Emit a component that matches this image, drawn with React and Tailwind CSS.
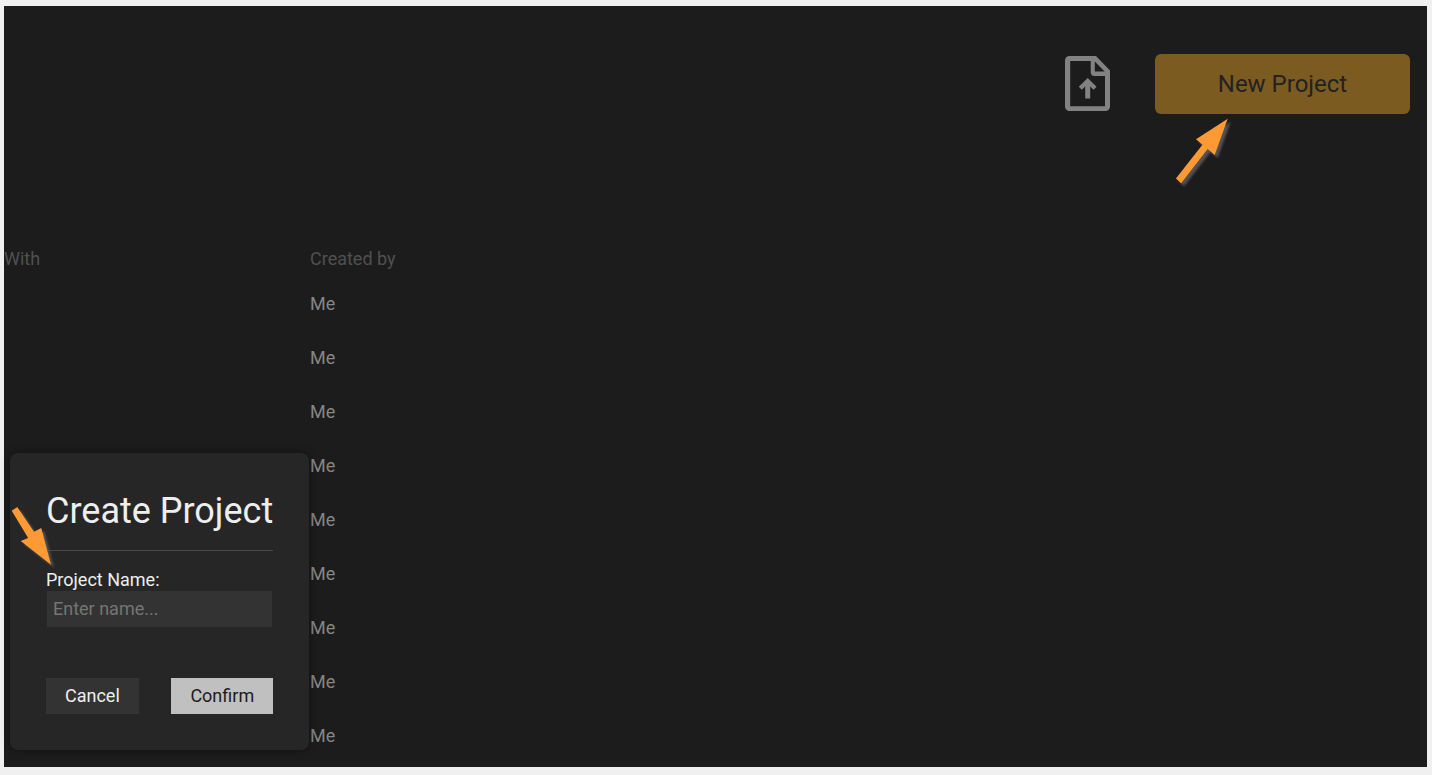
import { useState } from 'react';

const projects = [
  { id: 1, sharedWith: '', createdBy: 'Me' },
  { id: 2, sharedWith: '', createdBy: 'Me' },
  { id: 3, sharedWith: '', createdBy: 'Me' },
  { id: 4, sharedWith: '', createdBy: 'Me' },
  { id: 5, sharedWith: '', createdBy: 'Me' },
  { id: 6, sharedWith: '', createdBy: 'Me' },
  { id: 7, sharedWith: '', createdBy: 'Me' },
  { id: 8, sharedWith: '', createdBy: 'Me' },
  { id: 9, sharedWith: '', createdBy: 'Me' },
];

const UploadFileIcon = () => (
  <svg width="45" height="55" viewBox="0 0 45 55" fill="#828282" aria-hidden="true">
    <path
      fillRule="evenodd"
      d="M4.5 0H31L45 14.5V50.5A4.5 4.5 0 0 1 40.5 55H4.5A4.5 4.5 0 0 1 0 50.5V4.5A4.5 4.5 0 0 1 4.5 0ZM5.2 5V50.3H40V20H29.5A4 4 0 0 1 25.7 16V5ZM29.8 5.4V15.4H39.6Z"
    />
    <path d="M22.7 22L31.6 30.8L28.6 33.7L25.2 30.4V42.6H20.2V30.4L16.8 33.7L13.8 30.8Z" />
  </svg>
);

// Orange pointer with a soft shadow to the lower right
const Pointer = ({ className, width, height, points }) => (
  <svg
    className={className}
    width={width}
    height={height}
    viewBox={`0 0 ${width} ${height}`}
    aria-hidden="true"
  >
    <polygon points={points} fill="#525252" className="translate-x-[3px] translate-y-[3px] blur-[1px]" />
    <polygon points={points} fill="#ff9933" />
  </svg>
);

const CreateProjectDialog = () => {
  const [name, setName] = useState('');

  return (
    <form
      role="dialog"
      aria-labelledby="create-title"
      onSubmit={(e) => e.preventDefault()}
      className="absolute bottom-[17px] left-[6px] rounded-lg bg-[#262626] p-9 text-[#eeeeee] shadow-[0_0_8px_rgba(0,0,0,0.4)]"
    >
      <h2 id="create-title" className="border-b border-[#484848] pb-[17px] text-[36px] leading-[44px]">
        Create Project
      </h2>

      <div className="mt-[18px] flex flex-col">
        <label htmlFor="project-name" className="leading-[22px]">
          Project Name:
        </label>
        <input
          id="project-name"
          type="text"
          size={1}
          value={name}
          onChange={(e) => setName(e.target.value)}
          placeholder="Enter name..."
          className="mx-px h-9 min-w-0 bg-[#333333] px-1.5 pb-0.5 placeholder:text-[#757575] outline-none"
        />
      </div>

      <div className="mt-[51px] flex justify-between">
        <button type="button" className="h-9 bg-[#333333] px-[19px] pb-0.5">
          Cancel
        </button>
        <button type="submit" className="h-9 bg-[#c0c0c0] px-[19px] pb-0.5 text-[#1c1c1c]">
          Confirm
        </button>
      </div>

      <Pointer
        className="absolute top-[51px] left-0"
        width={56}
        height={72}
        points="1.7,6.7 7.3,3 24,27.8 31.3,24 41,60.7 10.7,37 18.2,34"
      />
    </form>
  );
};

export default function App() {
  return (
    <div className="min-h-screen bg-[#f0f0f0] pt-1.5 pr-[5px] pb-2 pl-1 font-['Roboto',sans-serif] text-[18px]">
      <main className="relative bg-[#1c1c1c] pt-12 pb-[5px]">
        <header className="flex items-center justify-end gap-[45px] pr-[17px]">
          <button type="button" aria-label="Upload project" className="pb-0.5">
            <UploadFileIcon />
          </button>
          <div className="relative">
            <button
              type="button"
              className="h-[60px] w-[255px] rounded-md bg-[#7b5b20] text-[24px] text-[#222222]"
            >
              New Project
            </button>
            <Pointer
              className="absolute top-[61px] left-[18px]"
              width={64}
              height={76}
              points="54.7,3.7 23,24.3 29.4,29.7 2.9,63.6 8.1,68.2 34.6,34 41.7,40"
            />
          </div>
        </header>

        <table className="mt-[126px] w-full table-fixed text-left">
          <thead>
            <tr className="h-9 text-[#505050]">
              <th className="w-[306px] font-normal">With</th>
              <th className="font-normal">Created by</th>
            </tr>
          </thead>
          <tbody className="text-[#868686]">
            {projects.map((project) => (
              <tr key={project.id} className="h-[54px]">
                <td>{project.sharedWith}</td>
                <td>{project.createdBy}</td>
              </tr>
            ))}
          </tbody>
        </table>

        <CreateProjectDialog />
      </main>
    </div>
  );
}
